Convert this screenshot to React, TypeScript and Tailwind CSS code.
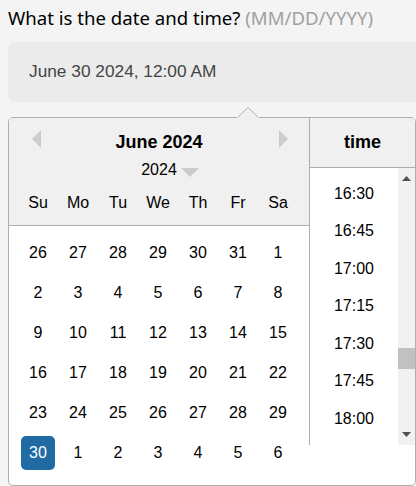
import React from "react";

const weeks: number[][] = [
  [26, 27, 28, 29, 30, 31, 1],
  [2, 3, 4, 5, 6, 7, 8],
  [9, 10, 11, 12, 13, 14, 15],
  [16, 17, 18, 19, 20, 21, 22],
  [23, 24, 25, 26, 27, 28, 29],
  [30, 1, 2, 3, 4, 5, 6],
];
const names = ["Su", "Mo", "Tu", "We", "Th", "Fr", "Sa"];
const times = ["16:30", "16:45", "17:00", "17:15", "17:30", "17:45", "18:00"];

export default function App() {
  return (
    <div className="w-[416px] h-[486px] overflow-hidden bg-[#f4f4f4] pl-2 pt-[6px]">
      <div
        className="h-6 text-[18.6px] leading-6 text-black whitespace-nowrap"
        style={{ fontFamily: '"Noto Sans", "Open Sans", sans-serif' }}
      >
        What is the date and time? <span className="text-[#a0a0a0]">(MM/DD/YYYY)</span>
      </div>
      <div
        className="mt-3 h-[60px] w-[440px] rounded-lg bg-[#ebebeb] pl-[21px] flex items-center text-[17.3px] text-[#444]"
        style={{ fontFamily: '"Liberation Sans", Arial, sans-serif' }}
      >
        June 30 2024, 12:00 AM
      </div>
      <div
        className="relative mt-[15px] w-[408px] h-[369px]"
        style={{ fontFamily: '"Liberation Sans", Arial, sans-serif' }}
      >
        <svg className="absolute left-[229px] top-[-10px] z-10" width="22" height="11" viewBox="0 0 22 11">
          <polygon points="0,11 11,0.5 22,11" fill="#f0f0f0" stroke="#aeaeae" strokeWidth="1" />
          <rect x="0" y="10" width="22" height="2" fill="#f0f0f0" />
        </svg>
        <div className="flex w-full h-full border border-[#aeaeae] rounded-[5px] bg-white overflow-hidden">
          <div className="w-[300px] shrink-0 flex flex-col">
            <div className="relative h-[108px] bg-[#f0f0f0] border-b border-[#aeaeae] flex flex-col items-center">
              <svg className="absolute left-[23px] top-[12px]" width="9" height="18" viewBox="0 0 9 18">
                <polygon points="9,0 0,9 9,18" fill="#cccccc" />
              </svg>
              <svg className="absolute left-[270px] top-[12px]" width="9" height="18" viewBox="0 0 9 18">
                <polygon points="0,0 9,9 0,18" fill="#cccccc" />
              </svg>
              <div className="mt-[12px] h-6 leading-6 text-[18px] font-bold text-black">June 2024</div>
              <div className="relative mt-[4px] h-6 leading-6 text-[16px] text-black">
                2024
                <svg className="absolute left-[40px] top-[10px]" width="18" height="9" viewBox="0 0 18 9">
                  <polygon points="0,0 18,0 9,9" fill="#cccccc" />
                </svg>
              </div>
              <div className="mt-[9px] flex pl-[9px] self-start">
                {names.map((n) => (
                  <div key={n} className="w-[34px] mx-[3px] h-6 leading-6 text-center text-[16px] text-black">
                    {n}
                  </div>
                ))}
              </div>
            </div>
            <div className="pt-[7px] pl-[9px] flex flex-col">
              {weeks.map((w, i) => (
                <div key={i} className="flex">
                  {w.map((d, j) => {
                    const sel = i === 5 && j === 0;
                    return (
                      <div
                        key={j}
                        className={
                          sel
                            ? "w-[34px] h-[34px] m-[3px] rounded-[5px] bg-[#216ba5] text-white flex items-center justify-center text-[16px]"
                            : "w-[34px] h-[34px] m-[3px] flex items-center justify-center text-[16px] text-black"
                        }
                      >
                        {d}
                      </div>
                    );
                  })}
                </div>
              ))}
            </div>
          </div>
          <div className="w-[106px] shrink-0 h-[327px] border-l border-[#aeaeae] flex flex-col">
            <div className="h-[50px] bg-[#f0f0f0] border-b border-[#aeaeae] flex items-center justify-center text-[18px] font-bold text-black">
              time
            </div>
            <div className="flex flex-1 overflow-hidden">
              <div className="flex-1 overflow-hidden pt-[7px]">
                {times.map((t) => (
                  <div key={t} className="h-[37.5px] flex items-center justify-center text-[16px] text-black">
                    {t}
                  </div>
                ))}
              </div>
              <div className="relative w-[17px] bg-[#f1f1f1]">
                <svg className="absolute left-[4px] top-[8px]" width="9" height="5" viewBox="0 0 9 5">
                  <polygon points="0,5 4.5,0 9,5" fill="#505050" />
                </svg>
                <div className="absolute left-0 top-[180px] w-[17px] h-[21px] bg-[#c1c1c1]" />
                <svg className="absolute left-[4px] bottom-[8px]" width="9" height="5" viewBox="0 0 9 5">
                  <polygon points="0,0 9,0 4.5,5" fill="#505050" />
                </svg>
              </div>
            </div>
          </div>
        </div>
      </div>
    </div>
  );
}
